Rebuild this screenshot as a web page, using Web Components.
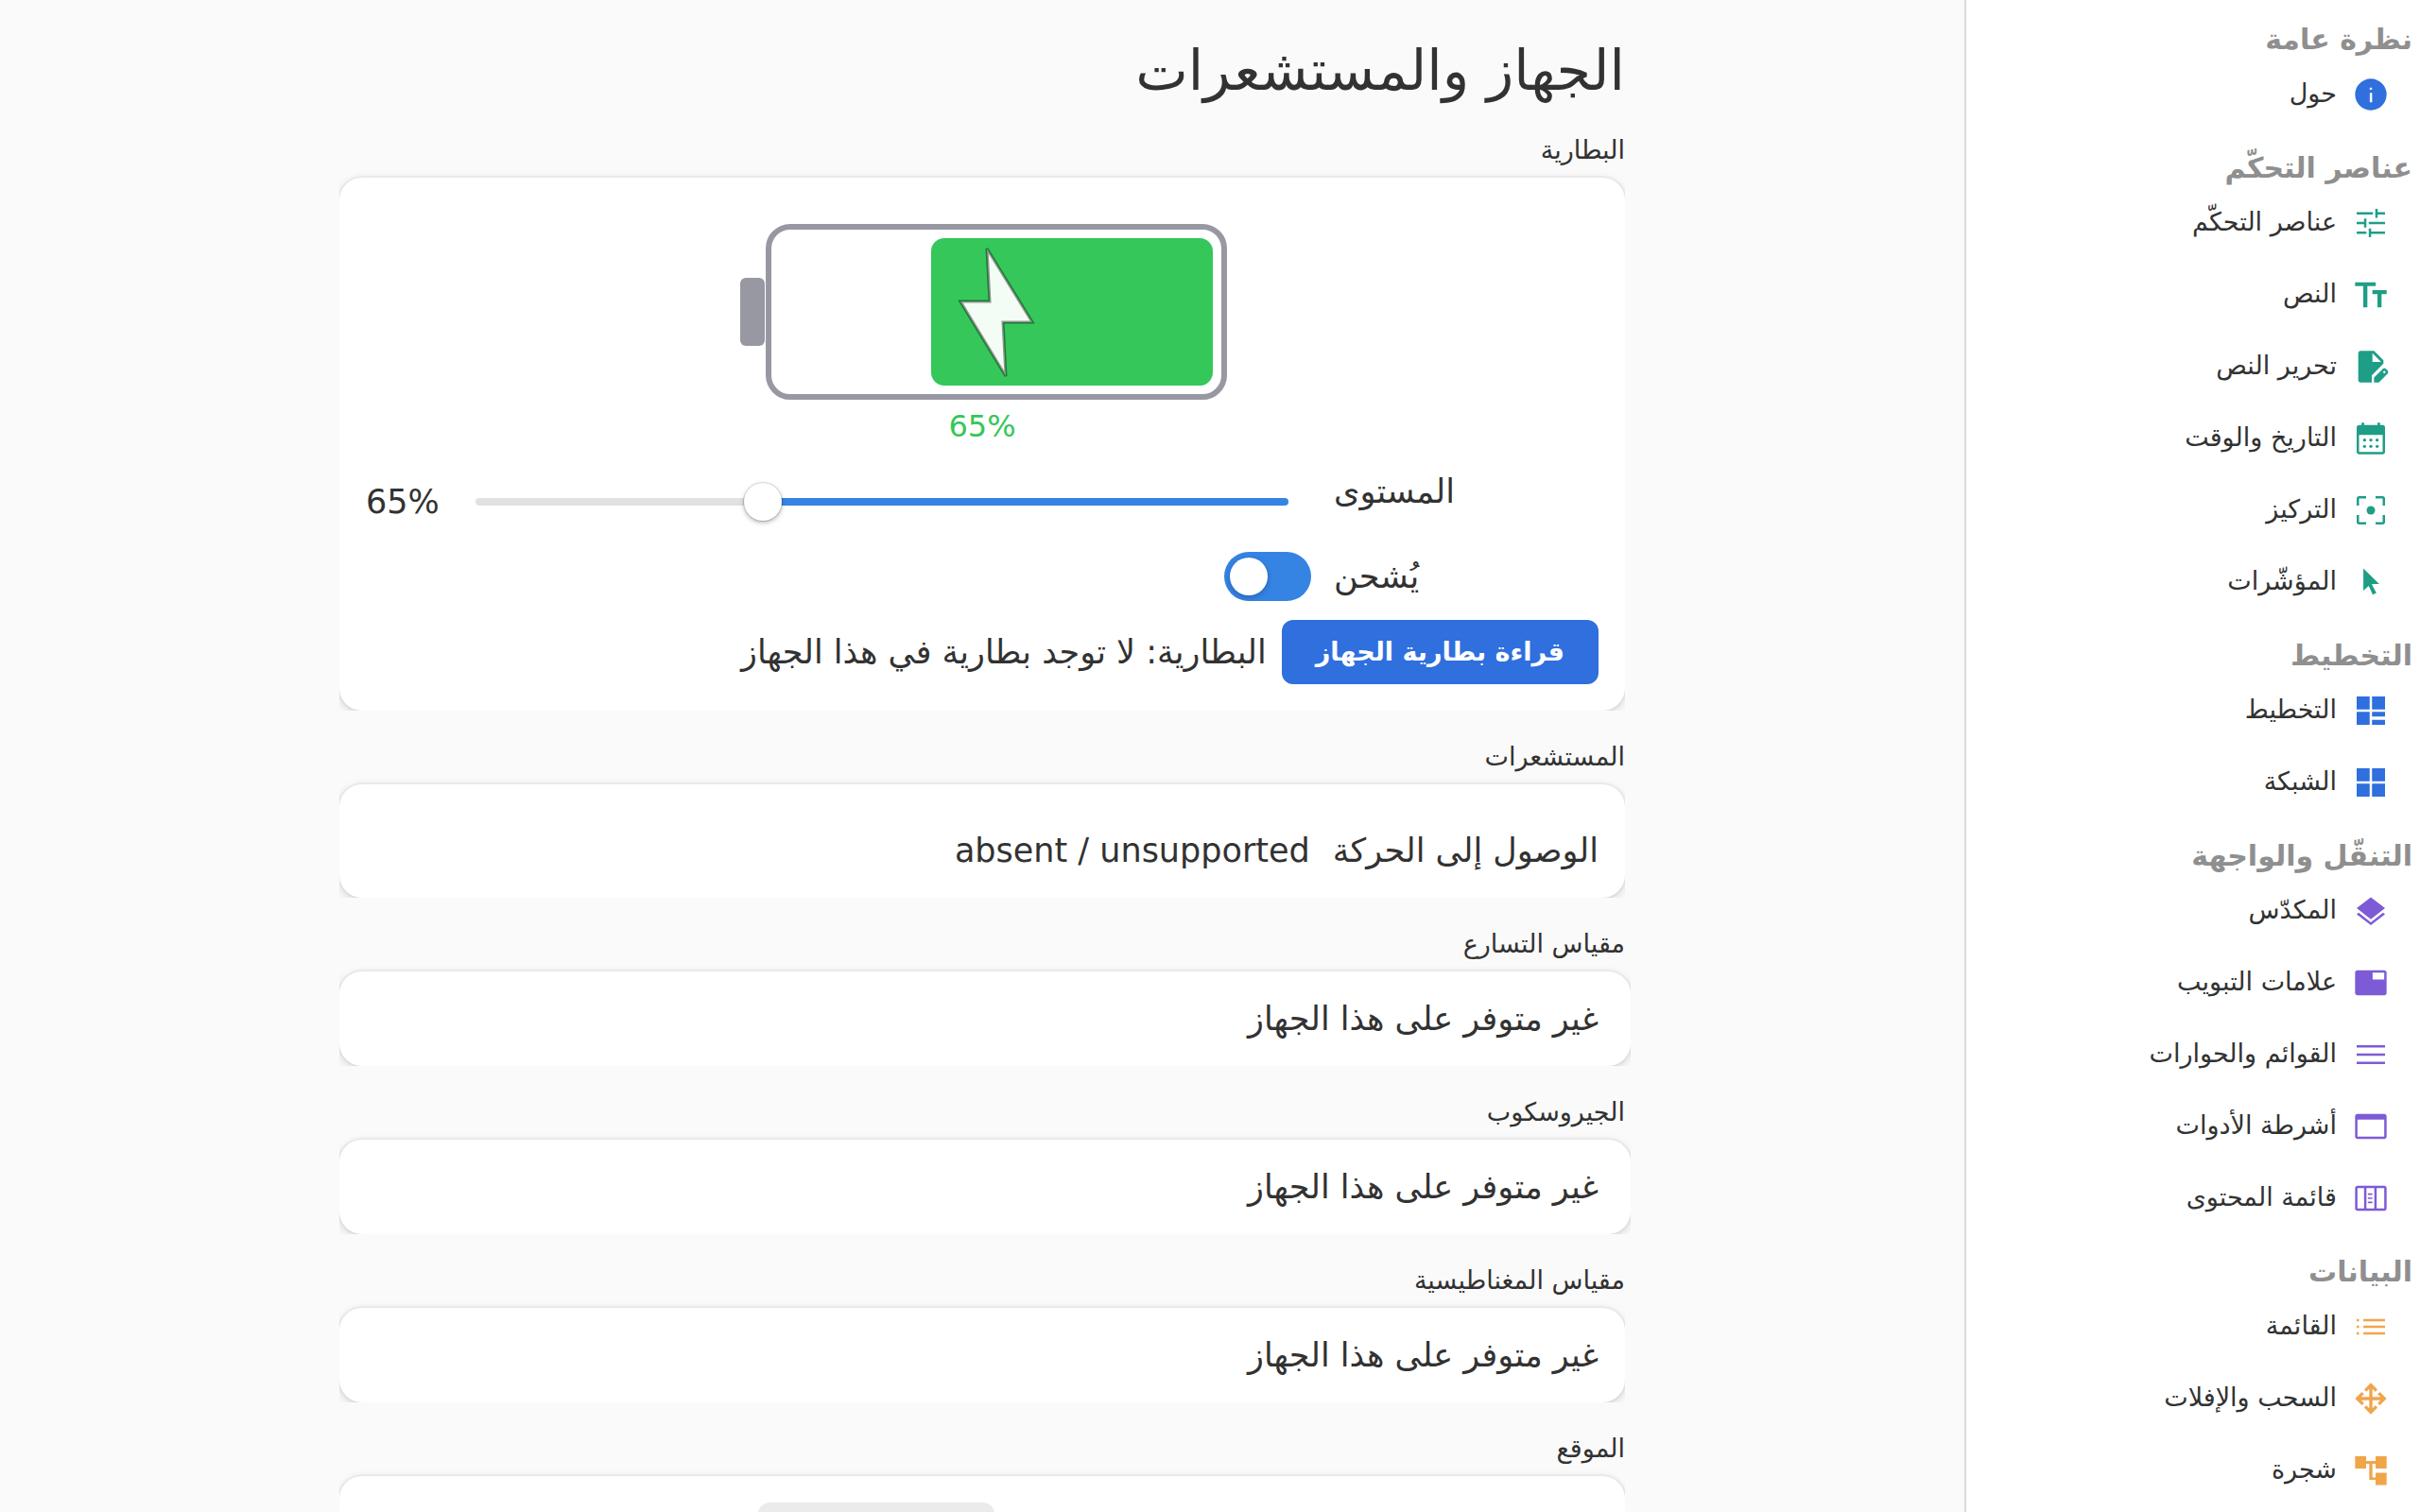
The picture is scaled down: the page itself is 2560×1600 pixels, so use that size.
<!DOCTYPE html>
<html lang="ar" dir="rtl">
<head>
<meta charset="utf-8">
<title>الجهاز والمستشعرات</title>
<style>
    body {
        margin: 0; height: 100vh; display: flex; overflow: hidden;
        font-family: "DejaVu Sans", sans-serif; font-size: 35px; line-height: 44px;
        color: #323232; background: #fafafa;
    }
</style>
</head>
<body>
<side-nav>
    <nav-group label="نظرة عامة" color="#2f6fde">
        <nav-item icon="info">حول</nav-item>
    </nav-group>
    <nav-group label="عناصر التحكّم" color="#1f9e87">
        <nav-item icon="tune">عناصر التحكّم</nav-item>
        <nav-item icon="text">النص</nav-item>
        <nav-item icon="edit">تحرير النص</nav-item>
        <nav-item icon="calendar">التاريخ والوقت</nav-item>
        <nav-item icon="focus">التركيز</nav-item>
        <nav-item icon="pointer">المؤشّرات</nav-item>
    </nav-group>
    <nav-group label="التخطيط" color="#2f6fde">
        <nav-item icon="dashboard">التخطيط</nav-item>
        <nav-item icon="grid">الشبكة</nav-item>
    </nav-group>
    <nav-group label="التنقّل والواجهة" color="#7d5bd6">
        <nav-item icon="layers">المكدّس</nav-item>
        <nav-item icon="tab">علامات التبويب</nav-item>
        <nav-item icon="menu">القوائم والحوارات</nav-item>
        <nav-item icon="toolbar">أشرطة الأدوات</nav-item>
        <nav-item icon="columns">قائمة المحتوى</nav-item>
    </nav-group>
    <nav-group label="البيانات" color="#f0a54b">
        <nav-item icon="list">القائمة</nav-item>
        <nav-item icon="move">السحب والإفلات</nav-item>
        <nav-item icon="tree">شجرة</nav-item>
    </nav-group>
</side-nav>
<app-page heading="الجهاز والمستشعرات">
    <card-section label="البطارية">
        <battery-gauge level="65"></battery-gauge>
        <level-slider label="المستوى" value="65.4"></level-slider>
        <toggle-row label="يُشحن" checked></toggle-row>
        <card-row><push-button primary>قراءة بطارية الجهاز</push-button><span>البطارية: لا توجد بطارية في هذا الجهاز</span></card-row>
    </card-section>
    <card-section label="المستشعرات">
        <card-row spaced><span>الوصول إلى الحركة</span><span>absent / unsupported</span></card-row>
    </card-section>
    <card-section label="مقياس التسارع" wide>غير متوفر على هذا الجهاز</card-section>
    <card-section label="الجيروسكوب" wide>غير متوفر على هذا الجهاز</card-section>
    <card-section label="مقياس المغناطيسية">غير متوفر على هذا الجهاز</card-section>
    <card-section label="الموقع">
        <card-row centered><push-button></push-button></card-row>
    </card-section>
</app-page>

<script>
// 960-unit grid, y runs from -960 to 0
const ICONS = {
    info: '<path d="M453-280h60v-240h-60v240Zm27-314q14 0 23.500-9.200T513-626q0-14.500-9.500-24.200T480-660q-14 0-23.500 9.800T447-626q0 13.600 9.500 22.800T480-594Zm0 514q-82.700 0-155.500-31.500t-127-86q-54.500-54.500-86-127.300T80-480.500q0-82.800 31.500-155.700T197.500-763q54.500-54 127.300-85.500T480.500-880q82.800 0 155.700 31.500T763-763q54 54 85.500 127T880-480.300q0 82.700-31.500 155.500T763-197.700q-54 54.300-127 86T480-80Z"/>',
    tune: '<path d="M427-120v-225h60v83h353v60H487v82h-60Zm-307-82v-60h247v60H120Zm187-166v-82H120v-60h187v-84h60v226h-60Zm120-82v-60h413v60H427Zm166-165v-225h60v82h187v60H653v83h-60Zm-473-83v-60h413v60H120Z"/>',
    text: '<path d="M288-160v-540H80v-100h522v100H392v540H288Zm360 0v-340H520v-100h360v100H752v340H648Z"/>',
    edit: '<path fill-rule="evenodd" d="M220-80q-24 0-42-18t-18-42v-680q0-24 18-42t42-18h341l239 239v84L504-261v181H220Zm301-521h219L521-820v219ZM560-80v-123l221-220q9-9 20-13t22-4q12 0 23 4.500t20 13.500l37 37q8 9 12.500 20t4.500 22q0 11-4 22.500T903-300L683-80H560Zm263-224 37-39-37-38-38 38 38 39Z"/>',
    calendar: '<path fill-rule="evenodd" d="M180-80q-24 0-42-18t-18-42v-620q0-24 18-42t42-18h65v-60h65v60h340v-60h65v60h65q24 0 42 18t18 42v620q0 24-18 42t-42 18H180Zm0-60h600v-430H180v430Z"/><circle cx="320" cy="-440" r="40"/><circle cx="480" cy="-440" r="40"/><circle cx="640" cy="-440" r="40"/><circle cx="320" cy="-280" r="40"/><circle cx="480" cy="-280" r="40"/><circle cx="640" cy="-280" r="40"/>',
    focus: '<path d="M180-120q-24 0-42-18t-18-42v-180h60v180h180v60H180Zm420 0v-60h180v-180h60v180q0 24-18 42t-42 18H600ZM120-600v-180q0-24 18-42t42-18h180v60H180v180h-60Zm660 0v-180H600v-60h180q24 0 42 18t18 42v180h-60Z"/><circle cx="480" cy="-480" r="108"/>',
    pointer: '<path d="M290-828 694-434H502L620-206l-92 46-102-226-136 122Z"/>',
    dashboard: '<path d="M120-510v-330h330v330H120Zm390 0v-330h330v330H510ZM120-120v-330h330v330H120Zm390-210v-120h330v120H510Zm0 210v-126h330v126H510Z"/>',
    grid: '<path d="M120-510v-330h330v330H120Zm390 0v-330h330v330H510ZM120-120v-330h330v330H120Zm390 0v-330h330v330H510Z"/>',
    layers: '<path d="M480-118 120-398l50-38 310 241 310-241 50 38-360 280Zm0-153L120-551l360-280 360 280-360 280Z"/>',
    tab: '<path fill-rule="evenodd" d="M140-160q-24 0-42-18t-18-42v-520q0-24 18-42t42-18h680q24 0 42 18t18 42v520q0 24-18 42t-42 18H140Zm385-405h295v-175H525v175Z"/>',
    menu: '<path d="M120-240v-60h720v60H120Zm0-210v-60h720v60H120Zm0-210v-60h720v60H120Z"/>',
    toolbar: '<path fill-rule="evenodd" d="M140-160q-24 0-42-18t-18-42v-520q0-24 18-42t42-18h680q24 0 42 18t18 42v520q0 24-18 42t-42 18H140Zm0-60h680v-436H140v436Z"/>',
    columns: '<path fill-rule="evenodd" d="M140-160q-24 0-42-18t-18-42v-520q0-24 18-42t42-18h680q24 0 42 18t18 42v520q0 24-18 42t-42 18H140Zm0-60h168v-520H140v520Zm228 0h200v-520H368v520Zm260 0h192v-520H628v520ZM404-565h116v-40H404v40Zm0 105h116v-40H404v40Zm0 105h116v-40H404v40Z"/>',
    list: '<path d="M290-620v-60h550v60H290Zm0 170v-60h550v60H290Zm0 170v-60h550v60H290ZM120-620v-60h60v60h-60Zm0 170v-60h60v60h-60Zm0 170v-60h60v60h-60Z"/>',
    move: '<path d="M480-80 310-250l57-57 73 73v-206H235l73 72-58 58L80-480l169-169 57 57-72 72h206v-206l-73 73-57-57 170-170 170 170-57 57-73-73v206h205l-73-72 58-58 170 170-170 170-57-57 73-73H520v205l72-73 58 58L480-80Z"/>',
    tree: '<path d="M600-120v-120H440v-410h-80v120H80v-310h280v120h240v-120h280v310H600v-120h-80v350h80v-120h280v310H600Z"/>',
};

class BaseElement extends HTMLElement {
    connectedCallback() {
        if (!this.shadowRoot) {
            this.attachShadow({mode: 'open'});
        }
        this.shadowRoot.innerHTML = this.template();
    }
}

customElements.define('side-nav', class extends BaseElement {
    template() {
        return `
            <style>
                :host {
                    flex: 0 0 auto; width: 480px; box-sizing: content-box; padding-top: 2px; overflow-y: auto;
                    scrollbar-width: none; background: #fff; border-inline-end: 2px solid #dadada;
                }
            </style>
            <nav><slot></slot></nav>
        `;
    }
});

customElements.define('nav-group', class extends BaseElement {
    template() {
        return `
            <style>
                :host { display: block; --icon-color: ${this.getAttribute('color')}; }
                h2 { margin: 0; padding: 20px 8px 0; font-size: 30px; line-height: 40px; font-weight: 700; color: #8f8f8f; }
            </style>
            <h2>${this.getAttribute('label')}</h2>
            <slot></slot>
        `;
    }
});

customElements.define('nav-item', class extends BaseElement {
    template() {
        return `
            <style>
                :host { display: block; }
                a {
                    display: flex; align-items: center; gap: 16px; height: 76px; padding: 0 32px;
                    font-size: 27px; line-height: 36px; color: inherit; text-decoration: none;
                }
                svg { flex: none; width: 40px; height: 40px; fill: var(--icon-color); }
                span { padding-bottom: 2px; }
            </style>
            <a href="#${this.getAttribute('icon')}">
                <svg viewBox="0 -960 960 960" aria-hidden="true">${ICONS[this.getAttribute('icon')]}</svg>
                <span><slot></slot></span>
            </a>
        `;
    }
});

customElements.define('app-page', class extends BaseElement {
    template() {
        return `
            <style>
                :host { flex: 1; min-width: 0; overflow-y: auto; scrollbar-width: none; }
                main { max-width: 1360px; margin: 0 auto; padding: 40px 0; display: flex; flex-direction: column; gap: 32px; }
                h1 { margin: 0; font-size: 59px; line-height: 70px; font-weight: 400; }
            </style>
            <main>
                <h1>${this.getAttribute('heading')}</h1>
                <slot></slot>
            </main>
        `;
    }
});

customElements.define('card-section', class extends BaseElement {
    template() {
        return `
            <style>
                :host { display: flex; flex-direction: column; gap: 12px; }
                h3 { margin: 0; font-size: 27px; line-height: 34px; font-weight: 400; }
                div {
                    display: flex; flex-direction: column; gap: 20px; padding: 28px; border-radius: 24px; background: #fff;
                    box-shadow: 0 0 0 2px rgba(0, 0, 0, .03), 0 2px 6px 2px rgba(0, 0, 0, .07), 0 4px 12px 4px rgba(0, 0, 0, .03);
                    clip-path: inset(-6px 0 0 0);
                }
                :host([wide]) div { margin-inline-start: -6px; padding-inline-start: 34px; }
            </style>
            <h3>${this.getAttribute('label')}</h3>
            <div><slot></slot></div>
        `;
    }
});

customElements.define('card-row', class extends BaseElement {
    template() {
        return `
            <style>
                :host { display: flex; align-items: center; gap: 16px; }
                :host([spaced]) { gap: 24px; padding-top: 20px; }
                :host([centered]) { padding-inline-start: 49%; }
            </style>
            <slot></slot>
        `;
    }
});

customElements.define('battery-gauge', class extends BaseElement {
    template() {
        const level = Number(this.getAttribute('level'));
        const width = Math.round(458 * level / 100);
        return `
            <style>
                :host { display: flex; flex-direction: column; align-items: center; gap: 2px; padding: 14px 0 8px; }
                svg { display: block; width: 520px; height: 200px; }
                span { font-size: 32px; line-height: 38px; color: #35c759; }
            </style>
            <svg viewBox="0 0 520 200" aria-hidden="true">
                <rect x="4" y="64" width="26" height="72" rx="6" fill="#9898a2"/>
                <rect x="34" y="10" width="482" height="180" rx="23" fill="none" stroke="#9898a2" stroke-width="6"/>
                <rect x="${504 - width}" y="22" width="${width}" height="156" rx="14" fill="#35c759"/>
                <path d="M265 33 313 111H282L285 168 237 89H268Z" fill="#fff" fill-opacity=".95" stroke="#000" stroke-opacity=".4" stroke-width="3"/>
            </svg>
            <span>${level}%</span>
        `;
    }
});

customElements.define('level-slider', class extends BaseElement {
    template() {
        const value = Number(this.getAttribute('value'));
        return `
            <style>
                :host { display: flex; align-items: center; height: 66px; --fill: ${value}%; }
                label { width: 280px; align-self: flex-start; text-align: left; }
                input {
                    flex: 1; min-width: 0; height: 42px; margin: 0 48px 0 24px; appearance: none; background: none;
                }
                input::-webkit-slider-runnable-track {
                    height: 8px; border-radius: 4px;
                    background: linear-gradient(to left, #3584e4 var(--fill), #e1e1e1 var(--fill));
                }
                input::-webkit-slider-thumb {
                    appearance: none; width: 40px; height: 40px; margin-top: -16px; border-radius: 50%; background: #fff;
                    box-shadow: 0 0 0 1px rgba(0, 0, 0, .12), 0 2px 5px rgba(0, 0, 0, .3);
                }
                output { width: 92px; text-align: left; }
            </style>
            <label for="level">${this.getAttribute('label')}</label>
            <input id="level" type="range" min="0" max="100" step="any" value="${value}">
            <output for="level">${Math.round(value)}%</output>
        `;
    }

    connectedCallback() {
        super.connectedCallback();
        const input = this.shadowRoot.querySelector('input');
        const output = this.shadowRoot.querySelector('output');
        input.addEventListener('input', () => {
            input.style.setProperty('--fill', `${input.value}%`);
            output.textContent = `${Math.round(input.value)}%`;
        });
    }
});

customElements.define('toggle-row', class extends BaseElement {
    template() {
        return `
            <style>
                :host { display: flex; align-items: center; gap: 24px; }
                label { width: 280px; text-align: left; }
                input {
                    appearance: none; box-sizing: border-box; display: flex; width: 92px; height: 52px; margin: 0;
                    padding: 6px; border-radius: 26px; background: #e1e1e1;
                }
                input::before {
                    content: ""; width: 40px; height: 40px; border-radius: 50%; background: #fff;
                    box-shadow: 0 2px 6px rgba(0, 0, 0, .25);
                }
                input:checked { background: #3584e4; justify-content: flex-end; }
            </style>
            <label for="toggle">${this.getAttribute('label')}</label>
            <input id="toggle" type="checkbox" role="switch" ${this.hasAttribute('checked') ? 'checked' : ''}>
        `;
    }
});

customElements.define('push-button', class extends BaseElement {
    template() {
        return `
            <style>
                :host { display: inline-flex; }
                button {
                    font: inherit; font-size: 27px; line-height: 36px; font-weight: 700; min-width: 250px; min-height: 68px;
                    padding: 16px 36px; border: 0; border-radius: 12px; background: #ebebeb; color: inherit; cursor: pointer;
                }
                :host([primary]) button { background: #2f6fde; color: #fff; }
            </style>
            <button type="button"><slot></slot></button>
        `;
    }
});
</script>
</body>
</html>
